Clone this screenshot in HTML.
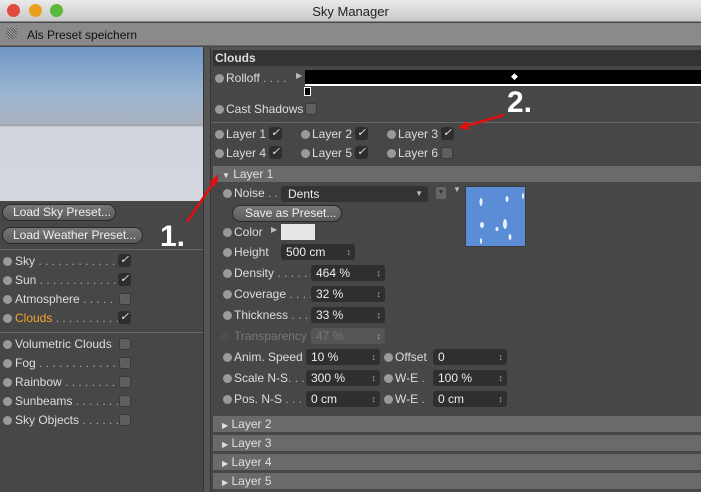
<!DOCTYPE html><html><head><style>
*{margin:0;padding:0;box-sizing:border-box}
body{width:701px;height:492px;overflow:hidden;background:#474747;font-family:"Liberation Sans",sans-serif;font-size:12px;color:#ddd;position:relative}
.a{position:absolute;white-space:nowrap}
.dot{position:absolute;width:9px;height:9px;border-radius:50%;background:#9a9a9a}
.cb{position:absolute;width:12px;height:12px;border-radius:3px;background:#5f5f5f;border:1px solid #3a3a3a}
.ck{position:absolute;width:13px;height:13px;border-radius:3px;background:#2e2e2e;color:#eee;font-size:11px;line-height:13px;text-align:center;font-style:italic}
.fld{position:absolute;height:16px;background:#2f2f2f;border-radius:3px;color:#eee;padding-left:5px;line-height:16px}
.fld:after{content:"\2195";position:absolute;right:4px;top:0;font-size:9px;color:#aaa}
.btn{position:absolute;height:17px;border-radius:9px;background:linear-gradient(#777,#5a5a5a);border:1px solid #2a2a2a;color:#eee;line-height:15px;padding-left:10px}
.hdr{position:absolute;left:213px;width:488px;height:16px;background:#6a6a6a;line-height:16px;padding-left:9px;color:#e0e0e0}
.dots{color:#aaa}
.big{position:absolute;font-weight:bold;font-size:30px;color:#fff}
</style></head><body>
<div class="a" style="left:0;top:0;width:701px;height:22px;background:linear-gradient(#eaeaea,#c8c8c8);border-bottom:1px solid #888"></div>
<div class="dot" style="left:7px;top:4px;width:13px;height:13px;background:#e04a40"></div>
<div class="dot" style="left:29px;top:4px;width:13px;height:13px;background:#e9a020"></div>
<div class="dot" style="left:50px;top:4px;width:13px;height:13px;background:#5ab83a"></div>
<div class="a" style="left:0;width:701px;top:4px;text-align:center;color:#222;font-size:13px">Sky Manager</div>
<div class="a" style="left:0;top:23px;width:701px;height:23px;background:#8a8a8a;border-bottom:1px solid #666"></div>
<div class="a" style="left:6px;top:28px;width:11px;height:11px;background:repeating-linear-gradient(45deg,#555 0 1px,#aaa 1px 2px)"></div>
<div class="a" style="left:27px;top:28px;color:#111">Als Preset speichern</div>
<!-- left -->
<div class="a" style="left:0;top:47px;width:203px;height:154px;background:linear-gradient(#6f97c6 0%,#9bb5d2 30%,#a8b1bd 50%,#9a9ea4 50.5%,#a5a8ad 51%,#d2d6de 52%,#d3d7df 100%)"></div>
<div class="a" style="left:203px;top:47px;width:8px;height:445px;background:#555;border-left:1px solid #333;border-right:1px solid #333"></div>
<div class="btn" style="left:2px;top:204px;width:114px">Load Sky Preset...</div>
<div class="btn" style="left:2px;top:227px;width:141px">Load Weather Preset...</div>
<div class="a" style="left:0;top:249px;width:203px;height:1px;background:#666"></div>
<div class="a" style="left:0;top:332px;width:203px;height:1px;background:#666"></div>
<div class="dot" style="left:3px;top:257px"></div><div class="a" style="left:15px;top:254px">Sky <span class="dots">. . . . . . . . . . . . .</span></div><div class="ck" style="left:118px;top:254px">✓</div>
<div class="dot" style="left:3px;top:276px"></div><div class="a" style="left:15px;top:273px">Sun<span class="dots"> . . . . . . . . . . . .</span></div><div class="ck" style="left:118px;top:273px">✓</div>
<div class="dot" style="left:3px;top:295px"></div><div class="a" style="left:15px;top:292px">Atmosphere <span class="dots">. . . . .</span></div><div class="cb" style="left:119px;top:293px"></div>
<div class="dot" style="left:3px;top:314px"></div><div class="a" style="left:15px;top:311px;color:#f2a52a">Clouds<span class="dots"> . . . . . . . . . .</span></div><div class="ck" style="left:118px;top:311px">✓</div>
<div class="dot" style="left:3px;top:340px"></div><div class="a" style="left:15px;top:337px">Volumetric Clouds</div><div class="cb" style="left:119px;top:338px"></div>
<div class="dot" style="left:3px;top:359px"></div><div class="a" style="left:15px;top:356px">Fog<span class="dots"> . . . . . . . . . . . .</span></div><div class="cb" style="left:119px;top:357px"></div>
<div class="dot" style="left:3px;top:378px"></div><div class="a" style="left:15px;top:375px">Rainbow <span class="dots">. . . . . . . .</span></div><div class="cb" style="left:119px;top:376px"></div>
<div class="dot" style="left:3px;top:397px"></div><div class="a" style="left:15px;top:394px">Sunbeams<span class="dots"> . . . . . . .</span></div><div class="cb" style="left:119px;top:395px"></div>
<div class="dot" style="left:3px;top:416px"></div><div class="a" style="left:15px;top:413px">Sky Objects<span class="dots"> . . . . . .</span></div><div class="cb" style="left:119px;top:414px"></div>
<!-- right -->
<div class="a" style="left:211px;top:47px;width:490px;height:3px;background:#555"></div>
<div class="a" style="left:213px;top:50px;width:488px;height:16px;background:#333;font-weight:bold;padding-left:2px;line-height:17px;color:#ddd">Clouds</div>
<div class="dot" style="left:215px;top:74px"></div><div class="a" style="left:226px;top:71px">Rolloff <span class="dots">. . . .</span></div>
<div class="a" style="left:296px;top:71px;font-size:8px;color:#bbb">▶</div>
<div class="a" style="left:305px;top:70px;width:396px;height:14px;background:#000"></div>
<div class="a" style="left:305px;top:84px;width:396px;height:2px;background:#fff"></div>
<div class="a" style="left:511px;top:71px;color:#fff;font-size:9px">◆</div>
<div class="a" style="left:304px;top:87px;width:7px;height:9px;border:1px solid #fff;background:#000"></div>
<div class="dot" style="left:215px;top:105px"></div><div class="a" style="left:226px;top:102px">Cast Shadows</div><div class="cb" style="left:305px;top:103px"></div>
<div class="a" style="left:211px;top:122px;width:490px;height:1px;background:#666"></div>
<div class="dot" style="left:215px;top:130px"></div><div class="a" style="left:226px;top:127px">Layer 1</div><div class="ck" style="left:269px;top:127px">✓</div>
<div class="dot" style="left:301px;top:130px"></div><div class="a" style="left:312px;top:127px">Layer 2</div><div class="ck" style="left:355px;top:127px">✓</div>
<div class="dot" style="left:387px;top:130px"></div><div class="a" style="left:398px;top:127px">Layer 3</div><div class="ck" style="left:441px;top:127px">✓</div>
<div class="dot" style="left:215px;top:149px"></div><div class="a" style="left:226px;top:146px">Layer 4</div><div class="ck" style="left:269px;top:146px">✓</div>
<div class="dot" style="left:301px;top:149px"></div><div class="a" style="left:312px;top:146px">Layer 5</div><div class="ck" style="left:355px;top:146px">✓</div>
<div class="dot" style="left:387px;top:149px"></div><div class="a" style="left:398px;top:146px">Layer 6</div><div class="cb" style="left:441px;top:147px"></div>
<div class="hdr" style="top:166px"><span style="font-size:8px">▼</span> Layer 1</div>
<div class="dot" style="left:223px;top:189px"></div><div class="a" style="left:234px;top:186px">Noise <span class="dots">. .</span></div>
<div class="a" style="left:281px;top:186px;width:147px;height:16px;background:#333;border-radius:3px;padding-left:7px;line-height:16px;color:#eee">Dents<span style="position:absolute;right:5px;font-size:8px;color:#bbb">▼</span></div>
<div class="a" style="left:436px;top:187px;width:10px;height:12px;background:#666;border-radius:2px;font-size:7px;text-align:center;line-height:12px;color:#333">▼</div>
<div class="a" style="left:453px;top:185px;font-size:8px;color:#bbb">▼</div>
<div class="a" style="left:465px;top:186px;width:61px;height:61px;background:#5b8cd6;border:1px solid #3a3a3a"></div>
<svg class="a" style="left:465px;top:186px" width="61" height="61"><g fill="#e8f0ff"><ellipse cx="16" cy="16" rx="1.5" ry="4"/><ellipse cx="42" cy="13" rx="1.5" ry="3"/><ellipse cx="58" cy="10" rx="1" ry="3"/><ellipse cx="17" cy="39" rx="2" ry="3"/><ellipse cx="40" cy="38" rx="2" ry="5"/><ellipse cx="45" cy="51" rx="1.5" ry="3"/><ellipse cx="32" cy="43" rx="1.5" ry="2"/><ellipse cx="16" cy="55" rx="1" ry="3"/></g></svg>
<div class="btn" style="left:232px;top:205px;width:110px;padding-left:12px">Save as Preset...</div>
<div class="dot" style="left:223px;top:228px"></div><div class="a" style="left:234px;top:225px">Color</div>
<div class="a" style="left:271px;top:225px;font-size:8px;color:#bbb">▶</div>
<div class="a" style="left:281px;top:224px;width:34px;height:16px;background:#e6e6e6"></div>
<div class="dot" style="left:223px;top:248px"></div><div class="a" style="left:234px;top:245px">Height</div><div class="fld" style="left:281px;top:244px;width:74px">500 cm</div>
<div class="dot" style="left:223px;top:269px"></div><div class="a" style="left:234px;top:266px">Density <span class="dots">. . . . .</span></div><div class="fld" style="left:311px;top:265px;width:74px">464 %</div>
<div class="dot" style="left:223px;top:290px"></div><div class="a" style="left:234px;top:287px">Coverage<span class="dots"> . . . .</span></div><div class="fld" style="left:311px;top:286px;width:74px">32 %</div>
<div class="dot" style="left:223px;top:311px"></div><div class="a" style="left:234px;top:308px">Thickness <span class="dots">. . .</span></div><div class="fld" style="left:311px;top:307px;width:74px">33 %</div>
<div class="a" style="left:221px;top:329px;color:#777">◌</div><div class="a" style="left:234px;top:329px;color:#777">Transparency</div><div class="fld" style="left:311px;top:328px;width:74px;background:#555;color:#777">47 %</div>
<div class="dot" style="left:223px;top:353px"></div><div class="a" style="left:234px;top:350px">Anim. Speed</div><div class="fld" style="left:306px;top:349px;width:74px">10 %</div>
<div class="dot" style="left:384px;top:353px"></div><div class="a" style="left:395px;top:350px">Offset</div><div class="fld" style="left:433px;top:349px;width:74px">0</div>
<div class="dot" style="left:223px;top:374px"></div><div class="a" style="left:234px;top:371px">Scale N-S<span class="dots">. . .</span></div><div class="fld" style="left:306px;top:370px;width:74px">300 %</div>
<div class="dot" style="left:384px;top:374px"></div><div class="a" style="left:395px;top:371px">W-E <span class="dots">.</span></div><div class="fld" style="left:433px;top:370px;width:74px">100 %</div>
<div class="dot" style="left:223px;top:395px"></div><div class="a" style="left:234px;top:392px">Pos. N-S <span class="dots">. . .</span></div><div class="fld" style="left:306px;top:391px;width:74px">0 cm</div>
<div class="dot" style="left:384px;top:395px"></div><div class="a" style="left:395px;top:392px">W-E <span class="dots">.</span></div><div class="fld" style="left:433px;top:391px;width:74px">0 cm</div>
<div class="hdr" style="top:416px"><span style="font-size:8px">▶</span> Layer 2</div>
<div class="hdr" style="top:435px"><span style="font-size:8px">▶</span> Layer 3</div>
<div class="hdr" style="top:454px"><span style="font-size:8px">▶</span> Layer 4</div>
<div class="hdr" style="top:473px"><span style="font-size:8px">▶</span> Layer 5</div>
<!-- annotations -->
<svg class="a" style="left:0;top:0" width="701" height="492"><g stroke="#e01010" stroke-width="2.5" fill="#e01010"><line x1="187" y1="222" x2="214" y2="182"/><polygon points="219,174 209,182 216,186" stroke="none"/><line x1="504" y1="115" x2="466" y2="126"/><polygon points="458,128 467,121 469,130" stroke="none"/></g></svg>
<div class="big" style="left:160px;top:220px">1.</div>
<div class="big" style="left:507px;top:86px">2.</div>
</body></html>
